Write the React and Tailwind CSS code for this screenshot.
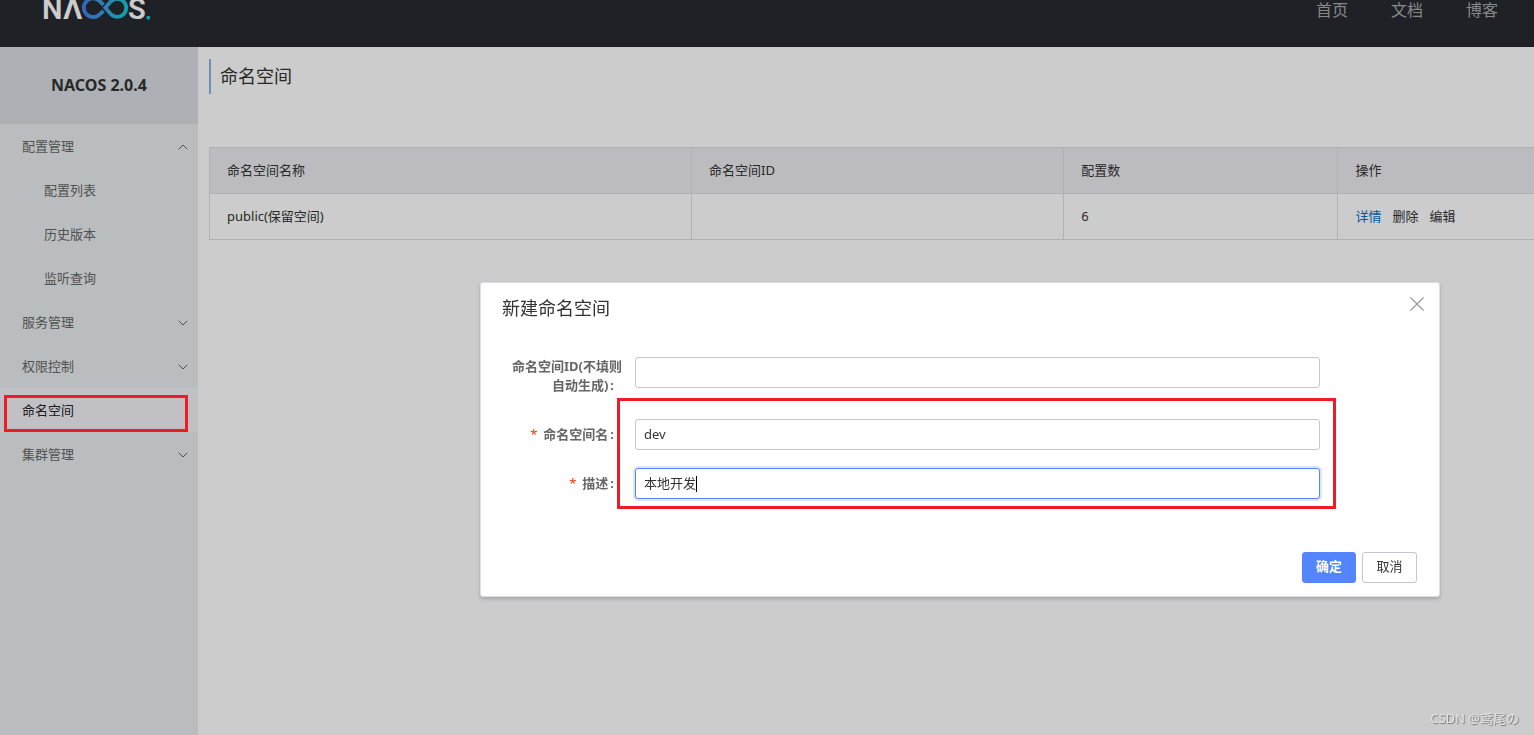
import { useState } from 'react';
import { ChevronDown, ChevronUp } from 'lucide-react';
import clsx from 'clsx';

const NAV_LINKS = ['首页', '文档', '博客'];

const MENU = [
  { label: '配置管理', open: true, children: ['配置列表', '历史版本', '监听查询'] },
  { label: '服务管理', children: [] },
  { label: '权限控制', children: [] },
  { label: '命名空间', active: true },
  { label: '集群管理', children: [] },
];

const NAMESPACES = [{ name: 'public(保留空间)', id: '', count: 6 }];

function Logo() {
  return (
    <svg width="110" height="22" viewBox="0 0 110 22" role="img" aria-label="NACOS">
      <defs>
        <linearGradient id="loop" gradientUnits="userSpaceOnUse" x1="40" y1="0" x2="84" y2="0">
          <stop offset="0" stopColor="#4080ea" />
          <stop offset="0.5" stopColor="#38a4e6" />
          <stop offset="1" stopColor="#18c9d3" />
        </linearGradient>
      </defs>
      <g fill="#fff" fontFamily="Roboto, sans-serif" fontSize="29" fontWeight="600">
        <text x="-1" y="19">N</text>
        <text x="20" y="19" fontSize="30">Λ</text>
        <text x="85" y="19">S</text>
      </g>
      <g fill="none" stroke="url(#loop)" strokeWidth="3.8">
        <path d="M60.500 10.800 L57 14 A9.300 9.300 0 1 1 57 1.500 L60.500 4.800" />
        <path d="M62.300 7.800 L67.500 1.800 A9 9 0 1 1 67.500 13.800 Z" />
      </g>
      <rect x="103.500" y="16" width="3.500" height="3.500" rx="1" fill="#18c9d3" />
    </svg>
  );
}

function Header() {
  return (
    <header className="flex h-[47px] items-start justify-between bg-[#262a2f] pr-9 pl-[43px]">
      <a href="#home">
        <Logo />
      </a>
      <nav className="flex gap-[43px] text-base leading-5 text-[#a8aaac]">
        {NAV_LINKS.map((label) => (
          <a key={label} href="#nav">
            {label}
          </a>
        ))}
      </nav>
    </header>
  );
}

function Sidebar() {
  return (
    <aside className="w-[198px] shrink-0 bg-[#e8edf0]">
      <h1 className="flex h-[77px] items-center justify-center bg-[#d9dde2] pb-px text-base font-bold text-[#333]">
        NACOS 2.0.4
      </h1>
      <ul className="text-[13px] text-[#666]">
        {MENU.map((item) => (
          <li key={item.label}>
            <a
              href="#menu"
              className={clsx(
                'relative flex h-11 items-center justify-between pt-px pr-[7px] pl-[22px]',
                item.active && 'bg-[#f2f2f7] text-[#222]'
              )}
            >
              {item.label}
              {item.children &&
                (item.open ? (
                  <ChevronUp className="h-4 w-4" strokeWidth={1.5} />
                ) : (
                  <ChevronDown className="h-4 w-4" strokeWidth={1.5} />
                ))}
              {item.active && (
                <span className="absolute top-[7px] right-[10px] bottom-0 left-1 z-20 border-3 border-[#ee1c24]" />
              )}
            </a>
            {item.open && (
              <ul>
                {item.children.map((child) => (
                  <li key={child}>
                    <a href="#menu" className="flex h-11 items-center pt-px pl-11">
                      {child}
                    </a>
                  </li>
                ))}
              </ul>
            )}
          </li>
        ))}
      </ul>
    </aside>
  );
}

function NamespaceTable() {
  return (
    <table className="mt-[53px] w-full table-fixed border-collapse text-left text-[13px] text-[#333]">
      <thead>
        <tr className="h-[46px] bg-[#ebecf0]">
          <th className="w-[36.4%] border border-[#dcdee3] px-[17px] font-normal">命名空间名称</th>
          <th className="w-[28.1%] border border-[#dcdee3] px-[17px] font-normal">命名空间ID</th>
          <th className="w-[20.7%] border border-[#dcdee3] px-[17px] font-normal">配置数</th>
          <th className="border border-r-0 border-[#dcdee3] px-[17px] font-normal">操作</th>
        </tr>
      </thead>
      <tbody>
        {NAMESPACES.map((ns) => (
          <tr key={ns.name} className="h-[46px]">
            <td className="border border-[#dcdee3] px-[17px]">{ns.name}</td>
            <td className="border border-[#dcdee3] px-[17px]">{ns.id}</td>
            <td className="border border-[#dcdee3] px-[17px]">{ns.count}</td>
            <td className="border border-r-0 border-[#dcdee3] px-[17px]">
              <div className="flex gap-[11px]">
                <a href="#detail" className="text-[#0070cc]">
                  详情
                </a>
                <a href="#delete">删除</a>
                <a href="#edit">编辑</a>
              </div>
            </td>
          </tr>
        ))}
      </tbody>
    </table>
  );
}

function Field({ id, label, required, multiline, children }) {
  return (
    <div className={clsx('flex', multiline ? 'items-start' : 'items-center')}>
      <label
        htmlFor={id}
        className="mr-[13px] w-[120px] shrink-0 pb-px text-right text-[13px] leading-[19px] font-bold text-[#666]"
      >
        {required && <span className="mr-1.5 font-normal text-[#ff3000]">*</span>}
        {label}
        <span className="mr-2 ml-0.5">:</span>
      </label>
      <div className="relative flex-1">{children}</div>
    </div>
  );
}

const INPUT =
  'block h-[31px] w-full rounded-[3px] border bg-white px-2 pb-0.5 text-[13px] text-[#333] outline-none';

function NamespaceDialog() {
  const [form, setForm] = useState({ id: '', name: 'dev', desc: '本地开发' });
  const update = (key) => (e) => setForm({ ...form, [key]: e.target.value });

  return (
    <div
      role="dialog"
      aria-labelledby="dialog-title"
      className="w-[960px] rounded-[3px] border border-[#dcdee3] bg-white shadow-[0_2px_4px_rgba(0,0,0,0.2)]"
    >
      <div className="flex items-start justify-between pt-[11px] pr-[15px] pl-[21px]">
        <h2 id="dialog-title" className="text-lg leading-7 text-[#333]">
          新建命名空间
        </h2>
        <button type="button" aria-label="关闭" className="mt-[3px] text-[#999]">
          <svg width="14" height="14" viewBox="0 0 14 14" stroke="currentColor" strokeWidth="1.2">
            <path d="M0.500 0.500l13 13M13.500 0.500l-13 13" />
          </svg>
        </button>
      </div>

      <form className="pt-[35px] pr-[119px] pl-[21px]">
        <Field id="ns-id" label="命名空间ID(不填则自动生成)" multiline>
          <input id="ns-id" className={clsx(INPUT, 'border-[#c4c6cf]')} value={form.id} onChange={update('id')} />
        </Field>
        <div className="relative mt-[23px] flex flex-col gap-[18px]">
          <Field id="ns-name" label="命名空间名" required>
            <input
              id="ns-name"
              className={clsx(INPUT, 'border-[#c4c6cf]')}
              value={form.name}
              onChange={update('name')}
            />
          </Field>
          <Field id="ns-desc" label="描述" required>
            <input
              id="ns-desc"
              className={clsx(INPUT, 'border-[#5584ff] caret-transparent ring-2 ring-[#5584ff]/20')}
              value={form.desc}
              onChange={update('desc')}
            />
            <span className="absolute top-2 left-[61px] h-4 w-px bg-black" />
          </Field>
          <span className="pointer-events-none absolute -top-[21px] -right-4 -bottom-[10px] left-[115px] border-3 border-[#ee1c24]" />
        </div>
      </form>

      <div className="mt-[53px] flex justify-end gap-1.5 pr-[22px] pb-[13px] text-[13px]">
        <button
          type="button"
          className="h-[31px] rounded-[3px] border border-[#5584ff] bg-[#5584ff] px-[13px] pb-px font-bold text-white"
        >
          确定
        </button>
        <button
          type="button"
          className="h-[31px] w-[55px] rounded-[3px] border border-[#c4c6cf] bg-white pb-px text-[#333]"
        >
          取消
        </button>
      </div>
    </div>
  );
}

export default function App() {
  return (
    <div className="flex min-h-screen flex-col bg-white font-['Noto_Sans','Noto_Sans_CJK_SC',sans-serif]">
      <Header />
      <div className="flex flex-1">
        <Sidebar />
        <main className="min-w-0 flex-1 pt-3 pl-[11px]">
          <h2 className="h-[35px] border-l-2 border-[#8bb4e4] pl-[9px] text-lg leading-[35px] text-[#333]">命名空间</h2>
          <NamespaceTable />
        </main>
      </div>

      <div className="fixed inset-0 z-10 flex items-start justify-end bg-black/20 pt-[282px] pr-[94px]">
        <NamespaceDialog />
      </div>

      <div className="fixed right-[15px] bottom-[7px] z-20 text-[13px] text-[#e4e4e4] [text-shadow:1px_1px_1px_#777]">
        CSDN @鸢尾の
      </div>
    </div>
  );
}
